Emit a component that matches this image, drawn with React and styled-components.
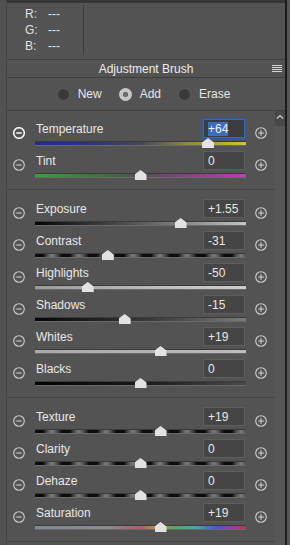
import React from "react";
import styled, { createGlobalStyle } from "styled-components";

const GlobalStyle = createGlobalStyle`
  html, body {
    margin: 0;
    padding: 0;
    background: #535353;
  }
  body {
    font-family: "Liberation Sans", Arial, sans-serif;
  }
`;

const Frame = styled.div`
  display: flex;
  width: 290px;
  height: 545px;
  overflow: hidden;
  background: #535353;
  color: #e6e6e6;
  font-size: 12px;
`;
const LeftStrip = styled.div`
  width: 6px;
  flex-shrink: 0;
  background: #525252;
  border-right: 1px solid #454545;
`;
const RightEdge = styled.div`
  width: 3px;
  flex-shrink: 0;
  background: #555;
  border-left: 2px solid #1c1c1c;
`;
const Main = styled.div`
  flex: 1;
  min-width: 0;
  display: flex;
  flex-direction: column;
`;
const TopBar = styled.div`
  height: 3px;
  background: #363636;
`;
const Info = styled.div`
  height: 56px;
  display: flex;
  border-bottom: 1px solid #404040;
`;
const Readout = styled.div`
  width: 58px;
  padding: 3px 0 0 18px;
  display: grid;
  grid-template-columns: 23px auto;
  grid-auto-rows: 16px;
  align-items: center;
  font-size: 12px;
  color: #e2e2e2;
`;
const InfoDivider = styled.div`
  width: 1px;
  margin: 2px 0 4px;
  background: #3d3d3d;
`;
const Header = styled.div`
  height: 17px;
  display: grid;
  grid-template-columns: 1fr auto 1fr;
  align-items: center;
  border-bottom: 1px solid #3e3e3e;
  font-size: 12px;
  color: #ececec;
`;
const MenuIcon = styled.div`
  justify-self: end;
  margin-right: 3px;
  width: 10px;
  height: 7px;
  background: repeating-linear-gradient(
    180deg,
    #d4d4d4 0,
    #d4d4d4 1px,
    transparent 1px,
    transparent 2px
  );
`;
const RadioRow = styled.div`
  height: 32px;
  display: flex;
  align-items: center;
  justify-content: center;
  gap: 17px;
  padding-right: 5px;
  border-bottom: 1px solid #3e3e3e;
`;
const RadioItem = styled.label`
  display: flex;
  align-items: center;
  gap: 8px;
  font-size: 12px;
  color: #e6e6e6;
`;
const RadioDot = styled.span`
  width: 11px;
  height: 11px;
  border-radius: 50%;
  border: 1px solid ${(p) => (p.$on ? "#d2d2d2" : "#5c5c5c")};
  background: ${(p) =>
    p.$on
      ? "radial-gradient(circle, #6d6d6d 0 2.5px, #c6c6c6 3px)"
      : "#393939"};
`;
const ScrollArea = styled.div`
  flex: 1;
  display: flex;
  min-height: 0;
`;
const Content = styled.div`
  flex: 1;
  min-width: 0;
`;
const Scrollbar = styled.div`
  width: 10px;
  display: flex;
  flex-direction: column;
  background: #565656;
`;
const ScrollUp = styled.div`
  height: 15px;
  display: flex;
  justify-content: center;
  padding-top: 3px;
  box-sizing: border-box;
  background: #484848;
`;
const Group = styled.div`
  padding: ${(p) => (p.$first ? "6px" : "7px")} 0 8px;
  border-bottom: 1px solid #464646;
`;
const Row = styled.div`
  height: 32px;
  display: grid;
  grid-template-columns: 28px 211px 1fr;
  align-items: center;
`;
const MinusWrap = styled.div`
  margin-left: 6px;
  width: 12px;
  height: 12px;
  display: flex;
`;
const PlusWrap = styled.div`
  justify-self: center;
  width: 12px;
  height: 12px;
  display: flex;
`;
const Center = styled.div`
  display: flex;
  flex-direction: column;
  height: 32px;
`;
const TopLine = styled.div`
  height: 23px;
  display: flex;
  align-items: center;
  justify-content: space-between;
`;
const Label = styled.span`
  padding-left: 1px;
  font-size: 12px;
  color: #e8e8e8;
`;
const ValueBox = styled.div`
  width: 42px;
  height: 19px;
  box-sizing: border-box;
  margin-right: 1px;
  padding-left: 4px;
  display: flex;
  align-items: center;
  background: ${(p) => (p.$active ? "#3c3c3c" : "#454545")};
  border: 1px solid ${(p) => (p.$active ? "#2f6acb" : "#5e5e5e")};
  box-shadow: ${(p) => (p.$active ? "0 0 0 1px #2a5aa8" : "none")};
  font-size: 12px;
  color: #e6e6e6;
`;
const Selected = styled.span`
  background: #3a6cc2;
  color: #f2f2f2;
  line-height: 14px;
`;

const tracks = {
  temp: "linear-gradient(90deg, #1d2b98 0%, #2a3580 25%, #45455a 50%, #8c8a3e 72%, #c8c43a 100%)",
  tint: "linear-gradient(90deg, #36a536 0%, #3c7a3c 25%, #505050 50%, #8e3f8e 75%, #b83eb8 100%)",
  exposure: "linear-gradient(90deg, #050505 0%, #5a5a5a 50%, #c4c4c4 100%)",
  highlights: "linear-gradient(90deg, #9a9a9a 0%, #b8b8b8 50%, #cfcfcf 100%)",
  shadows: "linear-gradient(90deg, #050505 0%, #3a3a3a 55%, #7a7a7a 100%)",
  whites: "linear-gradient(90deg, #a8a8a8 0%, #bcbcbc 100%)",
  blacks: "linear-gradient(90deg, #030303 0%, #1c1c1c 55%, #4a4a4a 100%)",
  dashed:
    "repeating-linear-gradient(90deg, #0b0b0b 0px, #0b0b0b 8px, #4c4c4c 12px, #7c7c7c 17px, #4c4c4c 22px, #0b0b0b 27px)",
  saturation:
    "linear-gradient(90deg, #7f8a9a 0%, #8c8c8c 35%, #b05a6a 50%, #b0a04a 58%, #5aa85a 66%, #4aa8b0 76%, #4a58c8 86%, #9a3ab0 93%, #c8304a 100%)",
};

const Track = styled.div`
  position: relative;
  height: 3px;
  margin-top: 2px;
  background: ${(p) => tracks[p.$kind]};
  box-shadow: 0 1px 0 #6a6a6a, 0 -1px 0 #3a3a3a;
`;
const Thumb = styled.div`
  position: absolute;
  top: -4px;
  width: 12px;
  height: 10px;
  transform: translateX(-50%);
  background: #e2e2e2;
  clip-path: polygon(50% 0, 100% 45%, 100% 100%, 0 100%, 0 45%);
`;

const CircleIcon = ({ plus, strong }) => (
  <svg width="12" height="12" viewBox="0 0 12 12">
    <circle
      cx="6"
      cy="6"
      r="5.3"
      fill="none"
      stroke={strong ? "#ffffff" : "#cfcfcf"}
      strokeWidth={strong ? 1.5 : 1.1}
    />
    <line
      x1="3.3"
      y1="6"
      x2="8.7"
      y2="6"
      stroke={strong ? "#ffffff" : "#cfcfcf"}
      strokeWidth={strong ? 1.5 : 1.1}
    />
    {plus && (
      <line x1="6" y1="3.3" x2="6" y2="8.7" stroke="#cfcfcf" strokeWidth="1.1" />
    )}
  </svg>
);

const groups = [
  [
    { name: "Temperature", value: "+64", pos: 0.82, kind: "temp", active: true },
    { name: "Tint", value: "0", pos: 0.5, kind: "tint" },
  ],
  [
    { name: "Exposure", value: "+1.55", pos: 0.69, kind: "exposure" },
    { name: "Contrast", value: "-31", pos: 0.345, kind: "dashed" },
    { name: "Highlights", value: "-50", pos: 0.25, kind: "highlights" },
    { name: "Shadows", value: "-15", pos: 0.425, kind: "shadows" },
    { name: "Whites", value: "+19", pos: 0.595, kind: "whites" },
    { name: "Blacks", value: "0", pos: 0.5, kind: "blacks" },
  ],
  [
    { name: "Texture", value: "+19", pos: 0.595, kind: "dashed" },
    { name: "Clarity", value: "0", pos: 0.5, kind: "dashed" },
    { name: "Dehaze", value: "0", pos: 0.5, kind: "dashed" },
    { name: "Saturation", value: "+19", pos: 0.595, kind: "saturation" },
  ],
];

const SliderRow = ({ s }) => (
  <Row>
    <MinusWrap>
      <CircleIcon strong={s.active} />
    </MinusWrap>
    <Center>
      <TopLine>
        <Label>{s.name}</Label>
        <ValueBox $active={s.active}>
          {s.active ? <Selected>{s.value}</Selected> : s.value}
        </ValueBox>
      </TopLine>
      <Track $kind={s.kind}>
        <Thumb style={{ left: `${s.pos * 100}%` }} />
      </Track>
    </Center>
    <PlusWrap>
      <CircleIcon plus />
    </PlusWrap>
  </Row>
);

export default function App() {
  return (
    <>
      <GlobalStyle />
      <Frame>
        <LeftStrip />
        <Main>
          <TopBar />
          <Info>
            <Readout>
              <span>R:</span>
              <span>---</span>
              <span>G:</span>
              <span>---</span>
              <span>B:</span>
              <span>---</span>
            </Readout>
            <InfoDivider />
          </Info>
          <Header>
            <span />
            <span>Adjustment Brush</span>
            <MenuIcon />
          </Header>
          <RadioRow>
            <RadioItem>
              <RadioDot />
              New
            </RadioItem>
            <RadioItem>
              <RadioDot $on />
              Add
            </RadioItem>
            <RadioItem>
              <RadioDot />
              Erase
            </RadioItem>
          </RadioRow>
          <ScrollArea>
            <Content>
              {groups.map((g, i) => (
                <Group key={i} $first={i === 0}>
                  {g.map((s) => (
                    <SliderRow key={s.name} s={s} />
                  ))}
                </Group>
              ))}
            </Content>
            <Scrollbar>
              <ScrollUp>
                <svg width="8" height="5" viewBox="0 0 8 5">
                  <polyline
                    points="1,4.5 4,1.5 7,4.5"
                    fill="none"
                    stroke="#d0d0d0"
                    strokeWidth="1.2"
                  />
                </svg>
              </ScrollUp>
            </Scrollbar>
          </ScrollArea>
        </Main>
        <RightEdge />
      </Frame>
    </>
  );
}
